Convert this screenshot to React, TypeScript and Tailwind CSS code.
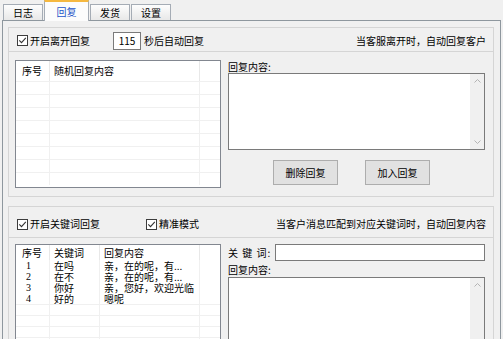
import React from "react";

const Check = ({ label }: { label: string }) => (
  <div className="flex items-center gap-[2px]">
    <span className="w-[11px] h-[11px] border border-[#3c3c3c] bg-white flex items-center justify-center">
      <svg width="9" height="9" viewBox="0 0 9 9">
        <path d="M1.3 4.3 L3.5 6.6 L7.8 1.8" stroke="#333" strokeWidth="1.1" fill="none" />
      </svg>
    </span>
    <span>{label}</span>
  </div>
);

const ScrollTrack = ({ down }: { down: boolean }) => (
  <div className="w-[14px] bg-[#f0f0f0] flex flex-col items-center justify-between py-[5px]">
    <svg width="7" height="4" viewBox="0 0 7 4">
      <path d="M0.5 3.5 L3.5 0.5 L6.5 3.5" stroke="#b4b4b4" strokeWidth="1" fill="none" />
    </svg>
    {down && (
      <svg width="7" height="4" viewBox="0 0 7 4">
        <path d="M0.5 0.5 L3.5 3.5 L6.5 0.5" stroke="#b4b4b4" strokeWidth="1" fill="none" />
      </svg>
    )}
  </div>
);

const Tab = ({ label, active, w }: { label: string; active?: boolean; w: string }) =>
  active ? (
    <div className={`${w} h-[21px] -mb-px z-10 bg-[#fcfcfc] border-x border-[#a5acb5] border-t-2 border-t-[#f5b840] flex items-center justify-center text-[#1c55c8]`}>
      {label}
    </div>
  ) : (
    <div className={`${w} h-[16px] bg-gradient-to-b from-[#fdfdfd] to-[#e8e8e8] border border-b-0 border-[#a5acb5] flex items-center justify-center`}>
      {label}
    </div>
  );

const keywordRows = [
  ["1", "在吗", "亲，在的呢，有..."],
  ["2", "在不", "亲，在的呢，有..."],
  ["3", "你好", "亲，您好，欢迎光临"],
  ["4", "好的", "嗯呢"],
];

export default function App() {
  return (
    <div className="w-[503px] h-[339px] overflow-hidden bg-[#f0f0f0] text-[10px] leading-none text-black font-['Noto_Sans_CJK_SC',sans-serif]">
      {/* tabs */}
      <div className="h-[20px] flex items-end pl-[3px] gap-[1px]">
        <Tab label="日志" w="w-[40px]" />
        <Tab label="回复" w="w-[45px]" active />
        <Tab label="发货" w="w-[40px]" />
        <Tab label="设置" w="w-[40px]" />
      </div>

      <div className="ml-[2px] w-[499px] h-[330px] border border-[#8e979e] pl-[5px] pt-[6px]">
        {/* leave reply group */}
        <div className="w-[486px] border border-[#d5d5d5]">
          <div className="h-[24px] border-b border-[#d5d5d5] flex items-center pl-[8px] pr-[7px] pt-[2px]">
            <Check label="开启离开回复" />
            <div className="ml-[23px] w-[28px] h-[18px] border border-[#7a7a7a] bg-white flex items-center justify-center">115</div>
            <span className="ml-[3px]">秒后自动回复</span>
            <span className="ml-auto">当客服离开时，自动回复客户</span>
          </div>
          <div className="flex pl-[6px] pr-[8px] pt-[8px] pb-[8px]">
            <div className="w-[206px] h-[128px] border border-[#828790] bg-white flex flex-col overflow-hidden">
              <div className="h-[20px] flex shrink-0">
                <div className="w-[34px] border-r border-[#e8e8e8] pl-[6px] flex items-center">序号</div>
                <div className="w-[150px] border-r border-[#e8e8e8] pl-[4px] flex items-center">随机回复内容</div>
                <div className="flex-1" />
              </div>
              {Array.from({ length: 8 }).map((_, i) => (
                <div key={i} className="h-[13px] flex shrink-0 border-t border-[#f0f0f0]">
                  <div className="w-[34px] border-r border-[#f0f0f0]" />
                  <div className="w-[150px] border-r border-[#f0f0f0]" />
                  <div className="flex-1" />
                </div>
              ))}
            </div>
            <div className="flex-1 ml-[7px] flex flex-col">
              <div className="h-[13px] flex items-center">回复内容:</div>
              <div className="h-[77px] border border-[#7a7a7a] bg-white flex justify-end">
                <ScrollTrack down />
              </div>
              <div className="mt-[10px] flex gap-[27px] pl-[45px]">
                <button className="w-[65px] h-[25px] bg-[#e1e1e1] border border-[#adadad]">删除回复</button>
                <button className="w-[65px] h-[25px] bg-[#e1e1e1] border border-[#adadad]">加入回复</button>
              </div>
            </div>
          </div>
        </div>

        {/* keyword reply group */}
        <div className="mt-[9px] w-[486px] h-[140px] border border-[#d5d5d5]">
          <div className="h-[31px] border-b border-[#d5d5d5] flex items-center pl-[8px] pr-[7px] pt-[4px]">
            <Check label="开启关键词回复" />
            <div className="ml-[46px]">
              <Check label="精准模式" />
            </div>
            <span className="ml-auto">当客户消息匹配到对应关键词时，自动回复内容</span>
          </div>
          <div className="flex pl-[6px] pr-[8px] pt-[6px]">
            <div className="w-[206px] h-[110px] border border-[#828790] bg-white flex flex-col overflow-hidden">
              <div className="h-[15px] flex shrink-0">
                <div className="w-[34px] border-r border-[#e8e8e8] pl-[6px] flex items-center">序号</div>
                <div className="w-[50px] border-r border-[#e8e8e8] pl-[4px] flex items-center">关键词</div>
                <div className="w-[100px] border-r border-[#e8e8e8] pl-[4px] flex items-center">回复内容</div>
                <div className="flex-1" />
              </div>
              {keywordRows.map((r) => (
                <div key={r[0]} className="h-[11px] flex shrink-0 items-center">
                  <div className="w-[34px] h-full flex items-center border-r border-[#f0f0f0] pl-[10px] font-['Liberation_Serif',serif]">{r[0]}</div>
                  <div className="w-[50px] h-full flex items-center border-r border-[#f0f0f0] pl-[4px] whitespace-nowrap">{r[1]}</div>
                  <div className="w-[100px] h-full flex items-center border-r border-[#f0f0f0] pl-[4px] whitespace-nowrap">{r[2]}</div>
                  <div className="flex-1" />
                </div>
              ))}
              {Array.from({ length: 5 }).map((_, i) => (
                <div key={i} className="h-[11px] flex shrink-0 border-t border-[#f0f0f0]">
                  <div className="w-[34px] border-r border-[#f0f0f0]" />
                  <div className="w-[50px] border-r border-[#f0f0f0]" />
                  <div className="w-[100px] border-r border-[#f0f0f0]" />
                  <div className="flex-1" />
                </div>
              ))}
            </div>
            <div className="flex-1 ml-[7px] flex flex-col">
              <div className="h-[17px] flex items-center">
                <span className="w-[47px] shrink-0 tracking-[1px] whitespace-nowrap">关 键 词:</span>
                <div className="flex-1 h-[17px] border border-[#7a7a7a] bg-white" />
              </div>
              <div className="h-[16px] flex items-center pt-[2px]">回复内容:</div>
              <div className="h-[70px] border border-[#7a7a7a] bg-white flex justify-end">
                <ScrollTrack down={false} />
              </div>
            </div>
          </div>
        </div>
      </div>
    </div>
  );
}
